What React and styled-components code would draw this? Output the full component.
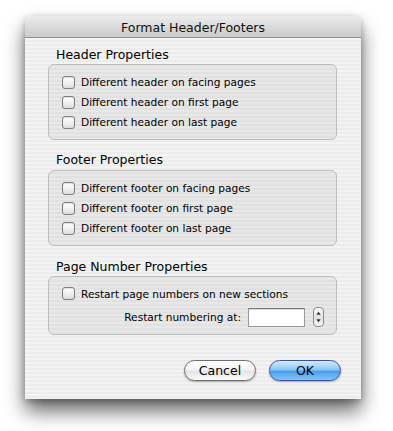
import styled, { createGlobalStyle } from "styled-components";

const Global = createGlobalStyle`
    html, body {
        margin: 0;
        padding: 0;
        background: #fff;
    }
    body {
        font-family: "DejaVu Sans", "Liberation Sans", sans-serif;
        color: #000;
    }
`

const Page = styled.div`
    width: 393px;
    height: 431px;
    padding: 16px 0 0 25px;
    box-sizing: border-box;
`
const Window = styled.div`
    width: 336px;
    height: 383px;
    border-radius: 6px 6px 0 0;
    background: repeating-linear-gradient(180deg, #ececec 0px, #ececec 2px, #f3f3f3 2px, #f3f3f3 4px);
    box-shadow: 0 12px 20px rgba(0, 0, 0, 0.6), 0 2px 6px rgba(0, 0, 0, 0.25);
    display: flex;
    flex-direction: column;
    overflow: hidden;
`
const TitleBar = styled.div`
    height: 22px;
    flex: none;
    background: linear-gradient(180deg, #ececec 0%, #d9d9d9 55%, #cbcbcb 100%);
    border-bottom: 1px solid #8f8f8f;
    box-sizing: border-box;
    display: flex;
    align-items: center;
    justify-content: center;
    font-size: 12.5px;
    color: #111;
    padding-top: 1px;
`
const Body = styled.div`
    flex: 1;
    padding: 9px 24px 0 23px;
    display: flex;
    flex-direction: column;
`
const Section = styled.div`
    display: flex;
    flex-direction: column;
    margin-bottom: ${p => p.$gap}px;
`
const SectionLabel = styled.div`
    font-size: 12.5px;
    line-height: 16px;
    padding-left: 8px;
    margin-bottom: ${p => p.$mb || 1}px;
`
const GroupBox = styled.div`
    border: 1px solid #bdbdbd;
    border-radius: 6px;
    background: rgba(0, 0, 0, 0.045);
    padding: ${p => p.$pad || "7px 0 7px 13px"};
    display: flex;
    flex-direction: column;
`
const Row = styled.label`
    height: ${p => p.$h || 20}px;
    display: flex;
    align-items: center;
    gap: 6px;
    font-size: 10.6px;
`
const Box = styled.span`
    width: 11px;
    height: 11px;
    border: 1px solid #7d7d7d;
    border-radius: 3px;
    background: linear-gradient(180deg, #ffffff 0%, #f1f1f1 50%, #dcdcdc 100%);
    box-shadow: inset 0 1px 1px rgba(0,0,0,0.12);
    flex: none;
`
const NumberRow = styled.div`
    height: 26px;
    display: flex;
    align-items: center;
    justify-content: flex-end;
    padding-right: 12px;
    font-size: 10.6px;
`
const FieldLabel = styled.span`
    margin-right: 7px;
`
const Field = styled.div`
    width: 55px;
    height: 17px;
    background: #fff;
    border: 1px solid #9a9a9a;
    border-top-color: #777;
    box-shadow: inset 0 1px 1px rgba(0,0,0,0.15);
    margin-right: 8px;
`
const Stepper = styled.div`
    width: 11px;
    height: 20px;
    border: 1px solid #8a8a8a;
    border-radius: 4px;
    background: linear-gradient(180deg, #fbfbfb 0%, #e2e2e2 50%, #f6f6f6 100%);
    display: flex;
    flex-direction: column;
    align-items: center;
    justify-content: space-around;
    padding: 2px 0;
    box-sizing: border-box;
`
const Buttons = styled.div`
    display: flex;
    justify-content: flex-end;
    gap: 13px;
    margin-top: auto;
    margin-bottom: 18px;
    margin-right: -4px;
`
const Button = styled.div`
    width: 72px;
    height: 21px;
    border-radius: 11px;
    box-sizing: border-box;
    display: flex;
    align-items: center;
    justify-content: center;
    font-size: 12.5px;
    border: 1px solid ${p => p.$primary ? "#3d4f9e" : "#6e6e6e"};
    background: ${p => p.$primary
        ? "linear-gradient(180deg, #d3ebff 0%, #8cc6f7 45%, #4aa0ec 55%, #7fc5fb 100%)"
        : "linear-gradient(180deg, #ffffff 0%, #f4f4f4 45%, #e4e4e4 55%, #fbfbfb 100%)"};
    box-shadow: 0 1px 2px rgba(0,0,0,0.3);
`

const Arrows = () => (
    <svg width="7" height="16" viewBox="0 0 7 16">
        <path d="M3.5 2 L6 5.5 L1 5.5 Z" fill="#333" />
        <path d="M3.5 14 L6 10.5 L1 10.5 Z" fill="#333" />
    </svg>
)

const header = ["Different header on facing pages", "Different header on first page", "Different header on last page"]
const footer = ["Different footer on facing pages", "Different footer on first page", "Different footer on last page"]

const App = () => {
    return (
        <>
            <Global />
            <Page>
                <Window>
                    <TitleBar>Format Header/Footers</TitleBar>
                    <Body>
                        <Section $gap={12}>
                            <SectionLabel>Header Properties</SectionLabel>
                            <GroupBox>
                                {header.map(t => <Row key={t}><Box />{t}</Row>)}
                            </GroupBox>
                        </Section>
                        <Section $gap={13}>
                            <SectionLabel $mb={2}>Footer Properties</SectionLabel>
                            <GroupBox>
                                {footer.map(t => <Row key={t}><Box />{t}</Row>)}
                            </GroupBox>
                        </Section>
                        <Section $gap={0}>
                            <SectionLabel>Page Number Properties</SectionLabel>
                            <GroupBox $pad="6px 0 4px 13px">
                                <Row $h={21}><Box />Restart page numbers on new sections</Row>
                                <NumberRow>
                                    <FieldLabel>Restart numbering at:</FieldLabel>
                                    <Field />
                                    <Stepper><Arrows /></Stepper>
                                </NumberRow>
                            </GroupBox>
                        </Section>
                        <Buttons>
                            <Button>Cancel</Button>
                            <Button $primary>OK</Button>
                        </Buttons>
                    </Body>
                </Window>
            </Page>
        </>
    )
}

export default App;
